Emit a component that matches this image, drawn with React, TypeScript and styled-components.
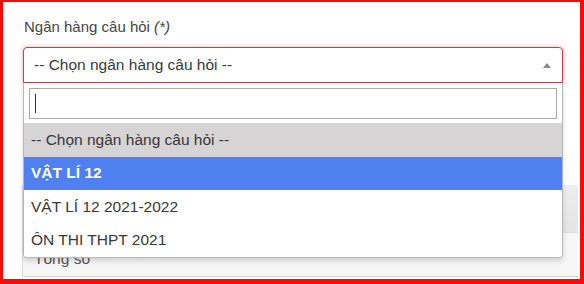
import React from 'react';
import styled, { createGlobalStyle } from 'styled-components';

const GlobalStyle = createGlobalStyle`
  html, body {
    margin: 0;
    padding: 0;
    background: #fff;
  }
  * {
    box-sizing: border-box;
  }
`;

const Frame = styled.div`
  width: 584px;
  height: 284px;
  border-style: solid;
  border-color: #f20c0c;
  border-width: 2px 4px 5px 3px;
  padding: 15px 0 0 20px;
  background: #fff;
  overflow: hidden;
  font-family: "Liberation Sans", Arial, sans-serif;
  font-size: 15.5px;
  color: #383838;
`;

const Label = styled.div`
  height: 20px;
  line-height: 20px;
  padding-left: 1px;
  margin-bottom: 10px;
  font-size: 15px;
  color: #444;

  em {
    font-style: italic;
  }
`;

const SelectWrap = styled.div`
  position: relative;
  width: 540px;
  z-index: 2;
`;

const SelectBox = styled.div`
  height: 36px;
  display: flex;
  align-items: center;
  justify-content: space-between;
  padding: 0 9px 0 10px;
  border: 1px solid #c2404f;
  border-radius: 4px 4px 0 0;
  box-shadow: 0 0 5px rgba(222, 70, 90, 0.45);
  background: #fff;
  color: #3a3a3a;
`;

const Arrow = styled.span`
  width: 0;
  height: 0;
  border-left: 4px solid transparent;
  border-right: 4px solid transparent;
  border-bottom: 5px solid #888;
  margin-right: 2px;
`;

const Dropdown = styled.div`
  position: absolute;
  top: 100%;
  left: 0;
  width: 540px;
  background: #fff;
  border: 1px solid #b8b8b8;
  border-top: none;
  border-radius: 0 0 4px 4px;
  box-shadow: 0 3px 5px rgba(0, 0, 0, 0.15);
  overflow: hidden;
`;

const SearchRow = styled.div`
  padding: 5px 5px 4px 5px;
`;

const SearchInput = styled.div`
  height: 31px;
  border: 1px solid #aaa;
  display: flex;
  align-items: center;
  padding-left: 5px;
`;

const Caret = styled.span`
  width: 1px;
  height: 19px;
  background: #333;
`;

const Option = styled.div<{ $state?: 'muted' | 'active' }>`
  height: 33.5px;
  display: flex;
  align-items: center;
  padding-left: 7px;
  background: ${(p) =>
    p.$state === 'muted' ? '#d6d4d5' : p.$state === 'active' ? '#4e80f0' : '#fff'};
  color: ${(p) => (p.$state === 'active' ? '#fff' : '#383838')};
  font-weight: ${(p) => (p.$state === 'active' ? 'bold' : 'normal')};
`;

const Panel = styled.div`
  margin: 102px 0 0 -1px;
  width: 556px;
  height: 92px;
  border-left: 1px solid #dcdcdc;
  border-bottom: 1px solid #d4d4d4;
  background: #f6f6f6;
`;

const PanelHead = styled.div`
  height: 48px;
  background: linear-gradient(#eeeeee, #e4e4e4);
  border-bottom: 1px solid #dedede;
`;

const PanelBody = styled.div`
  padding: 17px 0 0 11px;
  line-height: 18px;
  color: #555;
`;

const options = [
  { text: '-- Chọn ngân hàng câu hỏi --', state: 'muted' as const },
  { text: 'VẬT LÍ 12', state: 'active' as const },
  { text: 'VẬT LÍ 12 2021-2022' },
  { text: 'ÔN THI THPT 2021' },
];

export default function App() {
  return (
    <>
      <GlobalStyle />
      <Frame>
        <Label>
          Ngân hàng câu hỏi <em>(*)</em>
        </Label>
        <SelectWrap>
          <SelectBox>
            <span>-- Chọn ngân hàng câu hỏi --</span>
            <Arrow />
          </SelectBox>
          <Dropdown>
            <SearchRow>
              <SearchInput>
                <Caret />
              </SearchInput>
            </SearchRow>
            {options.map((o) => (
              <Option key={o.text} $state={o.state}>
                {o.text}
              </Option>
            ))}
          </Dropdown>
        </SelectWrap>
        <Panel>
          <PanelHead />
          <PanelBody>Tổng số</PanelBody>
        </Panel>
      </Frame>
    </>
  );
}
